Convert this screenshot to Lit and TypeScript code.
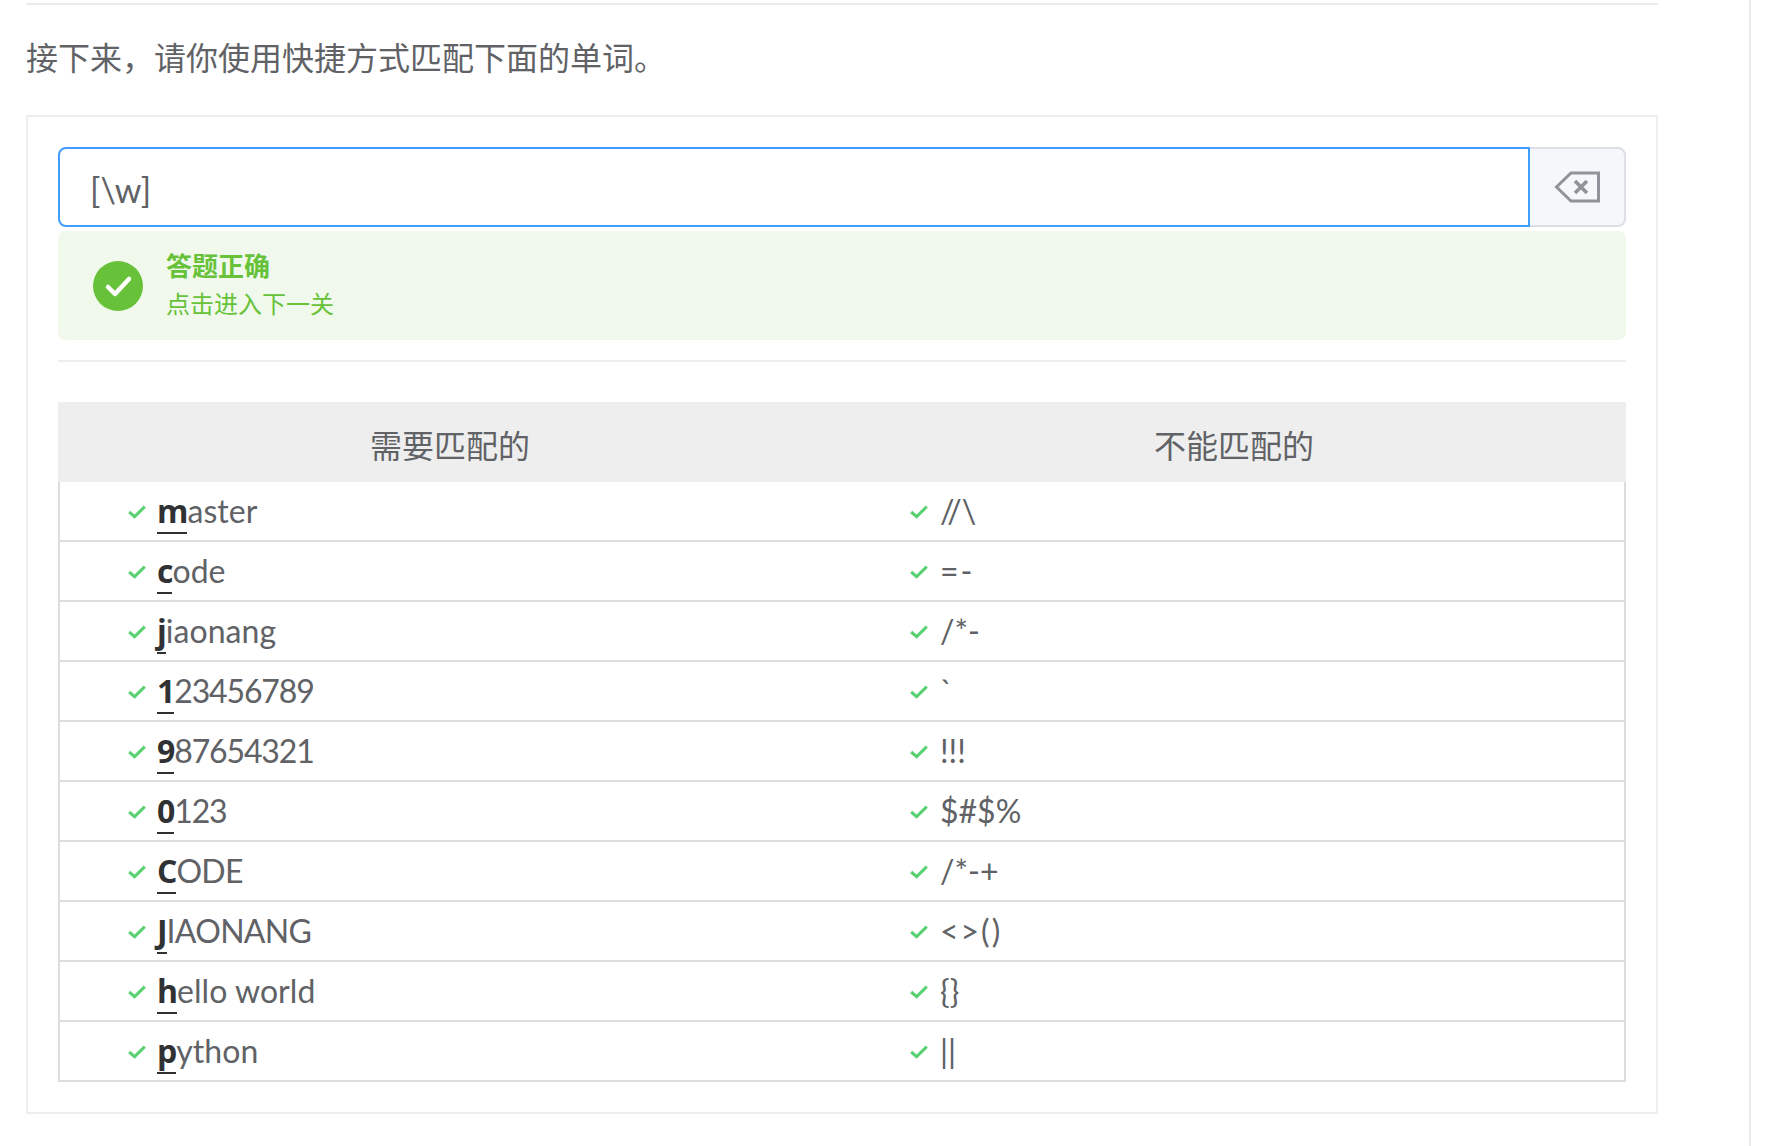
import { LitElement, html, css } from "lit";
import { customElement } from "lit/decorators.js";

const LEFT: [string, string][] = [
  ["m", "aster"], ["c", "ode"], ["j", "iaonang"], ["1", "23456789"], ["9", "87654321"],
  ["0", "123"], ["C", "ODE"], ["J", "IAONANG"], ["h", "ello world"], ["p", "ython"],
];
const RIGHT = ["//\\", "=-", "/*-", "`", "!!!", "$#$%", "/*-+", "<>()", "{}", "||"];

const trackClass = (word: string) =>
  /^\d+$/.test(word) ? "digits" : /^[A-Z]+$/.test(word) ? "caps" : "lower";

const check = html`<svg class="check" viewBox="0 0 18 14" aria-hidden="true"><path d="M1.2 7 L6.6 11.6 L16.8 1.6" fill="none" stroke="#5ad170" stroke-width="3"/></svg>`;

@customElement("app-root")
export class AppRoot extends LitElement {
  static styles = css`
    :host {
      display: block;
      height: 1146px;
      overflow: hidden;
      background: #fff;
      font-family: "Lato", "Noto Sans CJK SC", sans-serif;
      color: #606266;
    }
    .page {
      display: flex;
      height: 1146px;
    }
    .main {
      width: 1632px;
      margin-left: 26px;
      padding-top: 3px;
      box-sizing: border-box;
    }
    .rule {
      height: 2px;
      background: #ebebeb;
    }
    .lead {
      margin: 0;
      padding-top: 30px;
      height: 110px;
      box-sizing: border-box;
      font-size: 32px;
      line-height: 42px;
      font-family: "Noto Sans CJK SC", sans-serif;
    }
    .side {
      width: 2px;
      margin-left: 91px;
      background: #ebebeb;
    }
    .card {
      border: 2px solid #eee;
      padding: 30px 30px 32px;
      height: 999px;
      box-sizing: border-box;
    }
    .search {
      display: flex;
      height: 80px;
    }
    .field {
      flex: 1;
      border: 2px solid #409eff;
      border-radius: 8px 0 0 8px;
      padding: 4px 0 0 30px;
      font-size: 34px;
      display: flex;
      align-items: center;
    }
    .clear {
      width: 96px;
      box-sizing: border-box;
      background: #f5f7fa;
      border: 2px solid #dcdfe6;
      border-left: 0;
      border-radius: 0 8px 8px 0;
      display: flex;
      align-items: center;
      justify-content: center;
    }
    .clear svg {
      width: 46px;
      height: 32px;
    }
    .alert {
      margin-top: 4px;
      height: 109px;
      background: #f0f9eb;
      border-radius: 8px;
      display: flex;
      align-items: center;
      color: #67c23a;
      padding-left: 35px;
    }
    .alert svg {
      width: 50px;
      height: 50px;
      margin-right: 23px;
    }
    .alert-text {
      padding-bottom: 5px;
    }
    .alert-title {
      font-family: "Noto Sans CJK SC", sans-serif;
      font-size: 26px;
      font-weight: 700;
      line-height: 36px;
    }
    .alert-desc {
      font-family: "Noto Sans CJK SC", sans-serif;
      font-size: 24px;
      line-height: 34px;
      margin-top: 3px;
    }
    .divider {
      height: 2px;
      background: #eee;
      margin: 20px 0 40px;
    }
    .head {
      display: grid;
      grid-template-columns: 1fr 1fr;
      height: 80px;
      background: #eee;
      font-family: "Noto Sans CJK SC", sans-serif;
      font-size: 32px;
    }
    .head div {
      display: flex;
      align-items: center;
      justify-content: center;
      padding-top: 3px;
    }
    .head div + div {
      box-shadow: inset 1px 0 0 #ebebeb;
    }
    .rows {
      border: 2px solid #ddd;
      border-top: 0;
    }
    .row {
      display: grid;
      grid-template-columns: 782px 1fr;
      height: 60px;
      box-sizing: border-box;
      border-bottom: 2px solid #ddd;
      font-size: 32px;
    }
    .row:last-child {
      height: 58px;
      border-bottom: 0;
    }
    .cell {
      display: flex;
      align-items: center;
      padding-left: 68px;
    }
    .cell span {
      margin-bottom: 2px;
    }
    .check {
      width: 18px;
      height: 14px;
      margin: 2px 12px 0 0;
      flex: none;
    }
    .digits {
      letter-spacing: -1.15px;
    }
    .caps {
      letter-spacing: -0.7px;
    }
    .lower {
      letter-spacing: 0.05px;
    }
    .wide {
      letter-spacing: 2px;
    }
    b {
      font-family: "Open Sans", sans-serif;
      color: #303133;
      font-weight: 700;
      letter-spacing: -1px;
      margin-left: -1px;
      border-bottom: 2px solid #303133;
    }
  `;

  render() {
    return html`
      <div class="page">
        <div class="main">
          <div class="rule"></div>
          <p class="lead">接下来，请你使用快捷方式匹配下面的单词。</p>
          <div class="card">
            <div class="search">
              <div class="field">[\\w]</div>
              <div class="clear">
                <svg viewBox="0 0 46 32" aria-hidden="true"><path d="M17 2 H44.5 V30 H17 L2.5 16 Z" fill="none" stroke="#909399" stroke-width="3"/><path d="M21 10 L33 22 M33 10 L21 22" fill="none" stroke="#909399" stroke-width="3.6"/></svg>
              </div>
            </div>
            <div class="alert">
              <svg viewBox="0 0 50 50" aria-hidden="true"><circle cx="25" cy="25" r="25" fill="#67c23a"/><path d="M15 26 L22 33 L36 18" fill="none" stroke="#fff" stroke-width="4.5" stroke-linecap="round" stroke-linejoin="round"/></svg>
              <div class="alert-text">
                <div class="alert-title">答题正确</div>
                <div class="alert-desc">点击进入下一关</div>
              </div>
            </div>
            <div class="divider"></div>
            <div class="head"><div>需要匹配的</div><div>不能匹配的</div></div>
            <div class="rows">
              ${LEFT.map(
                ([a, rest], i) => html`<div class="row">
                  <div class="cell">${check}<span class=${trackClass(a + rest)}><b>${a}</b>${rest}</span></div>
                  <div class="cell">${check}<span class=${RIGHT[i] === "=-" || RIGHT[i] === "<>()" ? "wide" : ""}>${RIGHT[i]}</span></div>
                </div>`
              )}
            </div>
          </div>
        </div>
        <div class="side"></div>
      </div>
    `;
  }
}
